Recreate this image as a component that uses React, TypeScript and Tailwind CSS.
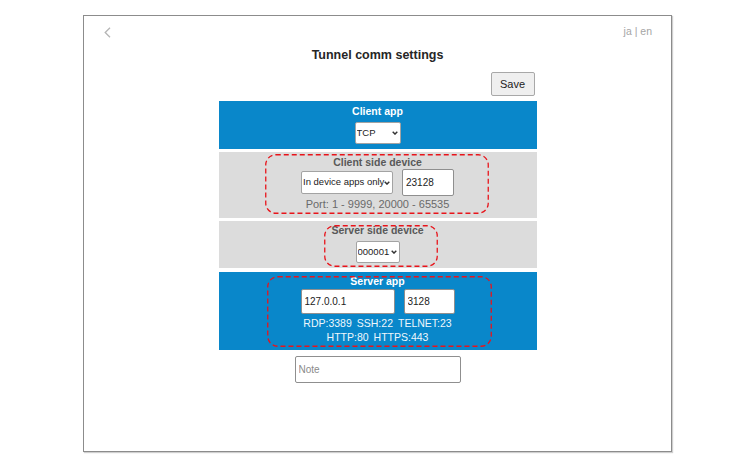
import type { ReactNode } from "react";

const FONT = "font-['Liberation_Sans',Arial,sans-serif]";

function Chevron() {
  return (
    <svg width="6" height="4" viewBox="0 0 6 4" className="pointer-events-none absolute right-[3px] top-1/2 -translate-y-1/2">
      <path d="M0.7 0.8 L3 3.1 L5.3 0.8" fill="none" stroke="#333" strokeWidth="1.4" />
    </svg>
  );
}

function Select({ value, options, width, height }: { value: string; options: string[]; width: number; height: number }) {
  return (
    <div className="relative inline-flex" style={{ width, height }}>
      <select
        defaultValue={value}
        className="h-full w-full appearance-none rounded-[2px] border border-[#a3a3a3] bg-white pl-[1px] text-[9.5px] text-[#222] outline-none"
      >
        {options.map((o) => (
          <option key={o}>{o}</option>
        ))}
      </select>
      <Chevron />
    </div>
  );
}

function TextBox({ value, width, height, placeholder }: { value?: string; width: number; height: number; placeholder?: string }) {
  return (
    <input
      defaultValue={value}
      placeholder={placeholder}
      style={{ width, height }}
      className="rounded-[2px] border border-[#8f8f8f] bg-white pl-[3px] text-[10px] text-[#222] outline-none placeholder:text-[#8a8a8a]"
    />
  );
}

// red dashed highlight drawn over a panel
function Marker({ left, top, w, h }: { left: number; top: number; w: number; h: number }) {
  return (
    <svg width={w} height={h} className="pointer-events-none absolute" style={{ left, top }}>
      <rect x="0.75" y="0.75" width={w - 1.5} height={h - 1.5} rx="10" fill="none" stroke="#e8141b" strokeWidth="1.3" strokeDasharray="5 3" />
    </svg>
  );
}

function Panel({ blue, className, children }: { blue?: boolean; className?: string; children: ReactNode }) {
  return (
    <div className={`relative flex flex-col items-center ${blue ? "bg-[#0987ca]" : "bg-[#dcdcdc]"} ${className ?? ""}`}>
      {children}
    </div>
  );
}

function Heading({ blue, children }: { blue?: boolean; children: ReactNode }) {
  return (
    <div className={`h-[14px] text-[10.5px] font-bold leading-[14px] ${blue ? "text-white" : "text-[#595959]"}`}>
      {children}
    </div>
  );
}

export default function App() {
  return (
    <div className={`h-[469px] w-[753px] bg-white ${FONT}`}>
      <div className="ml-[83px] mt-[15px] flex h-[437px] w-[589px] flex-col border border-[#8c8c8c] shadow-[1px_1px_1px_#cfcfcf]">
        <div className="flex h-[22px] items-end justify-between pl-[20px] pr-[19px]">
          <svg width="7" height="11" viewBox="0 0 7 11">
            <path d="M6 0.7 L1.2 5.5 L6 10.3" fill="none" stroke="#b5b5b5" strokeWidth="1.3" />
          </svg>
          <div className="mb-[1px] text-[10.5px] leading-[12px] text-[#a5a5a5]">ja | en</div>
        </div>

        <h1 className="mt-[9px] text-center text-[12.5px] font-bold leading-[16px] text-[#262626]">Tunnel comm settings</h1>

        <div className="mx-auto flex w-[318px] flex-col">
          <div className="mr-[2px] mt-[9px] flex justify-end">
            <button className="h-[24px] w-[44px] rounded-[2px] border border-[#a8a8a8] bg-[#efefef] text-[11px] text-[#222]">
              Save
            </button>
          </div>

          <div className="mt-[5px] flex flex-col gap-[3px]">
            <Panel blue className="h-[48px] pt-[3px]">
              <Heading blue>Client app</Heading>
              <div className="mt-[1px]">
                <Select value="TCP" options={["TCP", "UDP"]} width={46} height={22} />
              </div>
            </Panel>

            <Panel className="h-[66px] pt-[3px]">
              <Heading>Client side device</Heading>
              <div className="flex items-center gap-[9px]">
                <Select value="In device apps only" options={["In device apps only", "All"]} width={92} height={23} />
                <TextBox value="23128" width={52} height={27} />
              </div>
              <div className="mt-[1px] text-[11px] leading-[14px] text-[#6a6a6a]">Port: 1 - 9999, 20000 - 65535</div>
              <Marker left={46} top={2} w={224} h={60} />
            </Panel>

            <Panel className="h-[47px] pt-[2px]">
              <Heading>Server side device</Heading>
              <div className="mt-[1px]">
                <Select value="000001" options={["000001"]} width={44} height={22} />
              </div>
              <Marker left={105} top={4} w={114} h={42} />
            </Panel>

            <Panel blue className="mt-px h-[78px] pt-[2px]">
              <Heading blue>Server app</Heading>
              <div className="mt-px flex gap-[9px]">
                <TextBox value="127.0.0.1" width={94} height={25} />
                <TextBox value="3128" width={51} height={25} />
              </div>
              <div className="mt-[2px] flex gap-[5px] text-[10.5px] leading-[14px] text-[#eef7fc]">
                <span>RDP:3389</span>
                <span>SSH:22</span>
                <span>TELNET:23</span>
              </div>
              <div className="flex gap-[5px] text-[10.5px] leading-[14px] text-[#eef7fc]">
                <span>HTTP:80</span>
                <span>HTTPS:443</span>
              </div>
              <Marker left={48} top={4} w={225} h={71} />
            </Panel>
          </div>

          <div className="mt-[6px] flex justify-center">
            <TextBox placeholder="Note" width={166} height={27} />
          </div>
        </div>
      </div>
    </div>
  );
}
